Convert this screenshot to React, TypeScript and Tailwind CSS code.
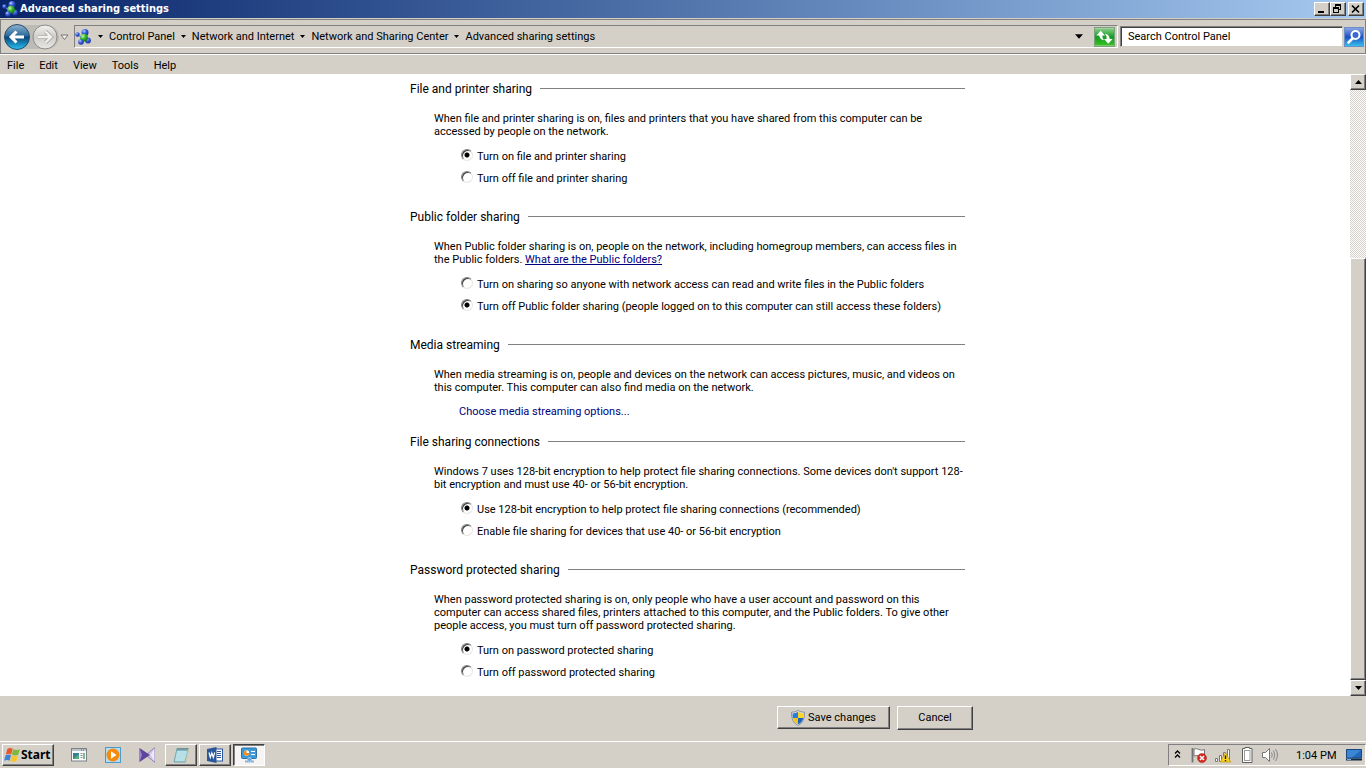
import type { ReactNode } from 'react';
import { clsx } from 'clsx';

const raised =
  'border border-t-white border-l-white border-r-[#404040] border-b-[#404040] bg-[#d4d0c8] shadow-[inset_-1px_-1px_0_#808080]';

const crumbs = ['Control Panel', 'Network and Internet', 'Network and Sharing Center', 'Advanced sharing settings'];
const menus = ['File', 'Edit', 'View', 'Tools', 'Help'];

type SectionData = {
  id: string;
  title: string;
  description: ReactNode;
  options?: string[];
  selected?: number;
  link?: string;
};

const sections: SectionData[] = [
  {
    id: 'file-printer',
    title: 'File and printer sharing',
    description: (
      <>
        When file and printer sharing is on, files and printers that you have shared from this computer can be
        <br />
        accessed by people on the network.
      </>
    ),
    options: ['Turn on file and printer sharing', 'Turn off file and printer sharing'],
    selected: 0,
  },
  {
    id: 'public-folder',
    title: 'Public folder sharing',
    description: (
      <>
        When Public folder sharing is on, people on the network, including homegroup members, can access files in
        <br />
        the Public folders.{' '}
        <a href="#public-folders" className="text-[#000080] underline">
          What are the Public folders?
        </a>
      </>
    ),
    options: [
      'Turn on sharing so anyone with network access can read and write files in the Public folders',
      'Turn off Public folder sharing (people logged on to this computer can still access these folders)',
    ],
    selected: 1,
  },
  {
    id: 'media',
    title: 'Media streaming',
    description: (
      <>
        When media streaming is on, people and devices on the network can access pictures, music, and videos on
        <br />
        this computer. This computer can also find media on the network.
      </>
    ),
    link: 'Choose media streaming options...',
  },
  {
    id: 'encryption',
    title: 'File sharing connections',
    description: (
      <>
        Windows 7 uses 128-bit encryption to help protect file sharing connections. Some devices don't support 128-
        <br />
        bit encryption and must use 40- or 56-bit encryption.
      </>
    ),
    options: [
      'Use 128-bit encryption to help protect file sharing connections (recommended)',
      'Enable file sharing for devices that use 40- or 56-bit encryption',
    ],
    selected: 0,
  },
  {
    id: 'password',
    title: 'Password protected sharing',
    description: (
      <>
        When password protected sharing is on, only people who have a user account and password on this
        <br />
        computer can access shared files, printers attached to this computer, and the Public folders. To give other
        <br />
        people access, you must turn off password protected sharing.
      </>
    ),
    options: ['Turn on password protected sharing', 'Turn off password protected sharing'],
    selected: 0,
  },
];

const NetworkIcon = ({ className }: { className: string }) => (
  <svg viewBox="0 0 16 16" className={className} aria-hidden="true">
    <defs>
      <radialGradient id="ballBlue" cx="0.35" cy="0.3" r="0.8">
        <stop offset="0" stopColor="#b9ccff" />
        <stop offset="0.4" stopColor="#3c62dc" />
        <stop offset="1" stopColor="#10279a" />
      </radialGradient>
      <radialGradient id="ballGreen" cx="0.35" cy="0.3" r="0.8">
        <stop offset="0" stopColor="#c4f7b4" />
        <stop offset="0.45" stopColor="#35b52c" />
        <stop offset="1" stopColor="#0b6a10" />
      </radialGradient>
    </defs>
    <circle cx="2.500" cy="5.500" r="2.200" fill="url(#ballBlue)" />
    <circle cx="10" cy="3.500" r="3.500" fill="url(#ballBlue)" />
    <circle cx="13" cy="11.500" r="2.900" fill="url(#ballBlue)" />
    <circle cx="9" cy="8.700" r="3.900" fill="url(#ballGreen)" />
    <circle cx="6" cy="13" r="2.800" fill="url(#ballBlue)" />
    <path d="M4 7L6 8" stroke="#6f8ccf" strokeWidth="1.200" />
  </svg>
);

const DownArrow = ({ className }: { className?: string }) => (
  <svg viewBox="0 0 7 4" className={clsx('shrink-0', className)} aria-hidden="true">
    <path d="M0 0H7L3.500 4Z" fill="#000" />
  </svg>
);

const TitleBar = () => (
  <header className="flex h-[18px] shrink-0 items-center bg-gradient-to-r from-[#0a246a] to-[#a6caf0] pr-[2px] pl-[2px]">
    <NetworkIcon className="h-4 w-4" />
    <h1 className="ml-[2px] flex-1 font-['DejaVu_Sans_Condensed','Noto_Sans',sans-serif] text-[11px] leading-4 font-bold text-white">
      Advanced sharing settings
    </h1>
    <button aria-label="Minimize" className={clsx('flex h-[14px] w-4 items-center justify-center', raised)}>
      <svg viewBox="0 0 12 10" className="h-[10px] w-3">
        <path d="M2 7H8V9H2Z" />
      </svg>
    </button>
    <button aria-label="Restore" className={clsx('flex h-[14px] w-4 items-center justify-center', raised)}>
      <svg viewBox="0 0 12 10" className="h-[10px] w-3" shapeRendering="crispEdges">
        <path d="M3 0H9V6H7V5H8V2H4V3H3ZM1 3H7V9H1ZM2 5V8H6V5Z" fillRule="evenodd" />
      </svg>
    </button>
    <button aria-label="Close" className={clsx('ml-[2px] flex h-[14px] w-4 items-center justify-center', raised)}>
      <svg viewBox="0 0 12 10" className="h-[10px] w-3">
        <path d="M2 1.500L9 8.500M9 1.500L2 8.500" stroke="#000" strokeWidth="1.700" />
      </svg>
    </button>
  </header>
);

const NavButtons = () => (
  <div className="flex shrink-0 items-center">
    <svg viewBox="0 0 66 28" className="h-7 w-[66px]" role="img" aria-label="Back and forward">
      <defs>
        <linearGradient id="backFill" x1="0" y1="0" x2="0" y2="1">
          <stop offset="0" stopColor="#8fb4cf" />
          <stop offset="0.450" stopColor="#2b6a9b" />
          <stop offset="0.500" stopColor="#0b4478" />
          <stop offset="1" stopColor="#25c4f4" />
        </linearGradient>
        <linearGradient id="forwardFill" x1="0" y1="0" x2="0" y2="1">
          <stop offset="0" stopColor="#f3f2f0" />
          <stop offset="0.500" stopColor="#cfcdc9" />
          <stop offset="1" stopColor="#e9e8e5" />
        </linearGradient>
      </defs>
      <rect x="2" y="2" width="54" height="24" rx="12" fill="#bdbbb6" />
      <circle cx="14" cy="14" r="12.500" fill="url(#backFill)" stroke="#294b69" />
      <path d="M21 14H9M13.500 8.500L8 14L13.500 19.500" fill="none" stroke="#fff" strokeWidth="3" />
      <circle cx="42" cy="14" r="12" fill="url(#forwardFill)" stroke="#8b8b8b" />
      <path d="M35 14H47M42.500 8.500L48 14L42.500 19.500" fill="none" stroke="#aaa8a4" strokeWidth="4" />
      <path d="M35 14H47M42.500 8.500L48 14L42.500 19.500" fill="none" stroke="#f2f1ef" strokeWidth="2.400" />
      <path d="M58 12H65L61.500 16.500Z" fill="#f4f4f4" stroke="#77756f" />
    </svg>
  </div>
);

const AddressBar = () => (
  <div className="border-b border-white pt-px">
    <div className="flex h-[35px] items-center border border-[#808080] pr-px pl-[2px]">
      <NavButtons />
      <nav
        aria-label="Breadcrumb"
        className="ml-[5px] flex h-[23px] flex-1 items-center border border-t-[#808080] border-r-white border-b-white border-l-[#808080]"
      >
        <NetworkIcon className="h-4 w-4" />
        <DownArrow className="mr-[6px] ml-[7px] h-[3px] w-[5px]" />
        {crumbs.map((crumb, i) => (
          <div key={crumb} className="flex items-center">
            {i > 0 && <DownArrow className="mx-[6px] h-[3px] w-[5px]" />}
            <a href="#">{crumb}</a>
          </div>
        ))}
        <button aria-label="Previous locations" className="ml-auto px-[11px]">
          <DownArrow className="h-[5px] w-2" />
        </button>
        <button aria-label="Refresh" className="h-5 w-[21px] border border-[#7aa37c]">
          <svg viewBox="0 0 20 18" className="h-full w-full">
            <defs>
              <linearGradient id="refreshFill" x1="0" y1="0" x2="0" y2="1">
                <stop offset="0" stopColor="#86cf86" />
                <stop offset="0.5" stopColor="#159a26" />
                <stop offset="1" stopColor="#37c321" />
              </linearGradient>
            </defs>
            <rect width="20" height="18" fill="url(#refreshFill)" />
            <path d="M6 2.500L1.500 7.500H4.500Q5 12 9.500 12.500Q7.500 10.500 7.700 7.500H10.500Z" fill="#fff" />
            <path d="M14 16L18.500 11H15.500Q15 6 10.500 5.500Q12.500 7.500 12.300 11H9.500Z" fill="#fff" />
          </svg>
        </button>
        <span className="w-[2px]" />
      </nav>
      <div className="ml-[2px] flex h-[23px] w-[244px] items-center">
        <input
          type="text"
          aria-label="Search Control Panel"
          placeholder="Search Control Panel"
          className="h-[21px] min-w-0 flex-1 border border-t-[#808080] border-r-[#d4d0c8] border-b-[#d4d0c8] border-l-[#808080] bg-white px-[7px] shadow-[inset_1px_1px_0_#404040] outline-none placeholder:text-black"
        />
        <button aria-label="Search" className="ml-px h-5 w-5">
          <svg viewBox="0 0 20 20" className="h-full w-full">
            <defs>
              <linearGradient id="searchFill" x1="0" y1="0" x2="0" y2="1">
                <stop offset="0" stopColor="#8ea9e6" />
                <stop offset="0.500" stopColor="#1e50c4" />
                <stop offset="1" stopColor="#35c6ee" />
              </linearGradient>
            </defs>
            <rect x="0.500" y="0.500" width="19" height="19" fill="url(#searchFill)" stroke="#6d8fc4" />
            <path d="M9 11L4.500 15.500" stroke="#fff" strokeWidth="2.600" strokeLinecap="round" />
            <circle cx="11.500" cy="8" r="4" fill="#3b68cf" stroke="#fff" strokeWidth="2" />
          </svg>
        </button>
      </div>
    </div>
  </div>
);

const MenuBar = () => (
  <div role="menubar" className="flex h-[19px] shrink-0 items-center gap-[15px] px-[7px] pt-[2px]">
    {menus.map((menu) => (
      <button key={menu} role="menuitem">
        {menu}
      </button>
    ))}
  </div>
);

const Section = ({ id, title, description, options, selected, link }: SectionData) => (
  <section aria-labelledby={`${id}-title`}>
    <div className="flex items-center gap-2">
      <h2 id={`${id}-title`} className="text-[12px] leading-4">
        {title}
      </h2>
      <div className="mb-px h-px flex-1 bg-[#808080]" />
    </div>
    <p className="mt-[15px] pl-6 leading-[13px] whitespace-nowrap">{description}</p>
    {options && (
      <div role="radiogroup" aria-labelledby={`${id}-title`} className="mt-[7px] mb-5 pl-[51px]">
        {options.map((option, i) => (
          <label key={option} className="flex h-[22px] items-center">
            <input
              type="radio"
              name={id}
              defaultChecked={i === selected}
              className="mb-[2px] h-3 w-3 shrink-0 appearance-none rounded-full border border-t-[#808080] border-r-[#e8e6e1] border-b-[#e8e6e1] border-l-[#808080] bg-white shadow-[inset_1px_1px_0_#404040] checked:bg-[radial-gradient(circle,#000_2px,transparent_3px)]"
            />
            <span className="ml-1 pt-[2px]">{option}</span>
          </label>
        ))}
      </div>
    )}
    {link && (
      <a href="#streaming" className="mt-[11px] mb-4 block pl-[49px] leading-[13px] text-[#000080]">
        {link}
      </a>
    )}
  </section>
);

const Scrollbar = () => (
  <div
    aria-hidden="true"
    className="flex w-4 shrink-0 flex-col bg-[conic-gradient(#fff_25%,#d4d0c8_0_50%,#fff_0_75%,#d4d0c8_0)] bg-[size:2px_2px]"
  >
    <div className={clsx('flex h-4 items-center justify-center', raised)}>
      <DownArrow className="h-1 w-[7px] rotate-180" />
    </div>
    <div className="flex-[169]" />
    <div className={clsx('flex-[421]', raised)} />
    <div className={clsx('flex h-4 items-center justify-center', raised)}>
      <DownArrow className="h-1 w-[7px]" />
    </div>
  </div>
);

const ShieldIcon = () => (
  <svg viewBox="0 0 14 16" className="h-4 w-[14px]" aria-hidden="true">
    <path d="M7 0.500Q10 2.200 13.500 2.200Q14.200 12 7 15.500Q-0.200 12 0.500 2.200Q4 2.200 7 0.500Z" fill="#d9dde0" stroke="#8b949c" />
    <path d="M7 2V8H1.700Q1.500 6 1.700 3.500Q4.500 3.400 7 2Z" fill="#2b7bd8" />
    <path d="M7 2V8H12.300Q12.500 6 12.300 3.500Q9.500 3.400 7 2Z" fill="#fbd42c" />
    <path d="M7 14.300V8H1.700Q2.600 12.300 7 14.300Z" fill="#f6c419" />
    <path d="M7 14.300V8H12.300Q11.400 12.300 7 14.300Z" fill="#1763bf" />
  </svg>
);

const Footer = () => (
  <footer className="h-11 shrink-0 pt-[10px]">
    <div className="mx-auto flex max-w-[580px] items-start justify-end gap-[7px]">
      <button className={clsx('flex h-[23px] w-[113px] items-center justify-center gap-[3px]', raised)}>
        <ShieldIcon />
        Save changes
      </button>
      <button className={clsx('h-6 w-[76px]', raised)}>Cancel</button>
    </div>
  </footer>
);

const WindowsLogo = () => (
  <svg viewBox="0 0 16 16" className="h-4 w-4" aria-hidden="true">
    <path d="M3.300 2Q6 0.300 8.700 1.800L7.200 7.500Q4.700 6 1.800 7.600Z" fill="#e8562a" />
    <path d="M9.300 2.200Q12 3.700 15.800 2.200L14.200 7.800Q11 9.200 7.900 7.800Z" fill="#7db83a" />
    <path d="M1.600 8.300Q4.500 7 7 8.200L5.600 13.700Q3 12.300 0.100 13.800Z" fill="#3f83d6" />
    <path d="M7.700 8.600Q10.800 9.900 14 8.500L12.500 14Q9.500 15.400 6.300 14Z" fill="#f9c62b" />
  </svg>
);

const ExplorerIcon = () => (
  <svg viewBox="0 0 16 14" className="h-[14px] w-4" aria-hidden="true">
    <rect x="0.500" y="0.500" width="15" height="12.500" fill="#f8f8f8" stroke="#7b8184" />
    <path d="M1 1H15V3H1Z" fill="#b9c3c9" />
    <path d="M10 2H14" stroke="#5c6970" strokeDasharray="1 1" />
    <rect x="2" y="5" width="6" height="6" fill="#3a7d96" />
    <path d="M2 11L8 6V11Z" fill="#58a884" />
    <path d="M9.500 5.500H11.500M9.500 7.500H11.500M9.500 9.500H11.500" stroke="#8b9499" />
    <path d="M13 5V11" stroke="#5aa776" strokeWidth="1.500" />
  </svg>
);

const PlayerIcon = () => (
  <svg viewBox="0 0 16 16" className="h-4 w-4" aria-hidden="true">
    <rect x="0.500" y="0.500" width="15" height="15" fill="#b7dcf1" stroke="#4b9bcb" />
    <circle cx="8" cy="8" r="6.500" fill="#f58a0b" />
    <path d="M6 4.200L11.500 8L6 11.800Z" fill="#fff" />
  </svg>
);

const VisualStudioIcon = () => (
  <svg viewBox="0 0 16 16" className="h-4 w-4" aria-hidden="true">
    <path d="M15.500 0.800V15.200L7 8Z" fill="#cfc6e3" stroke="#9484ba" />
    <path d="M15.500 1.500L11.500 8L15.500 14.500Z" fill="#eee9f6" />
    <path d="M0.500 1L11 8L0.500 15Z" fill="#5e459b" />
    <path d="M0.500 1L3 8L0.500 15Z" fill="#9a86c9" />
  </svg>
);

const NotepadIcon = () => (
  <svg viewBox="0 0 16 16" className="h-4 w-4" aria-hidden="true">
    <path d="M4 1.500H15.500L12.500 15H1Z" fill="#9cd3dc" stroke="#659aa4" strokeWidth="0.800" />
    <path d="M4 5H13.500M3.500 7H13M3 9H12.500M2.700 11H12M2.200 13H11.700" stroke="#d7f1f3" strokeWidth="0.900" />
    <path d="M4.500 2.500H15" stroke="#4e646b" strokeWidth="2" strokeDasharray="1 1" />
    <path d="M15.500 2L13 15" stroke="#d8cda2" />
  </svg>
);

const WordIcon = () => (
  <svg viewBox="0 0 16 16" className="h-4 w-4" aria-hidden="true">
    <rect x="8" y="2" width="7.500" height="12" fill="#fff" stroke="#2b579a" />
    <path d="M10 4.500H14M10 6.500H14M10 8.500H14M10 10.500H14" stroke="#2b579a" />
    <path d="M0 2L9.500 0V16L0 14Z" fill="#2b579a" />
    <path d="M2 5.500L3.300 10.500L4.800 6L6.300 10.500L7.700 5.500" fill="none" stroke="#fff" strokeWidth="1.200" />
  </svg>
);

const ControlPanelIcon = () => (
  <svg viewBox="0 0 16 16" className="h-4 w-4" aria-hidden="true">
    <rect x="0.500" y="1" width="15" height="10.500" rx="1" fill="#3e9ad9" stroke="#2d6ea5" />
    <circle cx="5.500" cy="6" r="2.700" fill="#fff" />
    <path d="M5.500 6V3.300A2.700 2.700 0 1 0 8.200 6Z" fill="#f08a24" />
    <path d="M10 4.500H14M10 7.500H14" stroke="#fff" />
    <path d="M6 12H11V13.500H13V15.500H4V13.500H6Z" fill="#8db4d2" />
    <circle cx="8.500" cy="12.500" r="2" fill="#5ba3d4" stroke="#d5e8f5" strokeWidth="0.600" />
  </svg>
);

const quickLaunch = [
  { label: 'Explorer', icon: <ExplorerIcon /> },
  { label: 'Media player', icon: <PlayerIcon /> },
  { label: 'Visual Studio', icon: <VisualStudioIcon /> },
];

const Tray = () => (
  <div className="flex h-[22px] w-[198px] items-center border border-t-[#808080] border-r-white border-b-white border-l-[#808080] pl-[5px]">
    <button aria-label="Show hidden icons">
      <svg viewBox="0 0 7 8" className="mb-[2px] h-2 w-[7px]">
        <path d="M1 3.500L3.500 1L6 3.500M1 7.500L3.500 5L6 7.500" fill="none" stroke="#000" strokeWidth="1.300" />
      </svg>
    </button>
    <svg viewBox="0 0 16 16" className="ml-[10px] h-4 w-4" aria-hidden="true">
      <path d="M1.500 1V15.500" stroke="#737373" strokeWidth="1.800" />
      <path d="M3 2Q5.500 1 8 2.500T13.500 2.500V9Q11 10 8.500 9T3 9Z" fill="#fff" stroke="#777" />
      <circle cx="11" cy="11" r="4.500" fill="#d7281e" stroke="#9f1c17" strokeWidth="0.500" />
      <path d="M9 9L13 13M13 9L9 13" stroke="#fff" strokeWidth="1.600" />
    </svg>
    <svg viewBox="0 0 16 16" className="ml-2 h-4 w-4" aria-hidden="true">
      <path
        d="M0.500 11.500H2.500V14.500H0.500ZM4.500 8.500H6.500V14.500H4.500ZM8.500 5.500H10.500V14.500H8.500ZM12.500 2.500H14.500V14.500H12.500Z"
        fill="#fff"
        stroke="#777"
      />
      <path d="M10.500 5.500L15.700 15H5.300Z" fill="#fbd51d" stroke="#bb910b" strokeWidth="0.700" />
      <path d="M10.500 8.500V12M10.500 13V14.200" stroke="#222" strokeWidth="1.400" />
    </svg>
    <svg viewBox="0 0 16 16" className="ml-2 h-4 w-4" aria-hidden="true">
      <path d="M6 0.500H10.500V1.500H13V15.500H3.500V1.500H6Z" fill="#fff" stroke="#5f5f5f" />
      <rect x="5.500" y="3.500" width="5.500" height="10" fill="#fff" stroke="#9c9c9c" />
    </svg>
    <svg viewBox="0 0 17 16" className="ml-[7px] h-4 w-[17px]" aria-hidden="true">
      <path d="M0.500 5.500H3.500L7.500 1.500V14.500L3.500 10.500H0.500Z" fill="#fff" stroke="#777" />
      <path d="M9.500 5.500Q11 8 9.500 10.500M11.500 3.500Q14 8 11.500 12.500M13.500 2Q17.500 8 13.500 14" fill="none" stroke="#888" />
    </svg>
    <time className="ml-[17px] pt-px whitespace-nowrap">1:04 PM</time>
    <button aria-label="Show desktop" className="mr-[3px] ml-auto">
      <svg viewBox="0 0 16 12" className="h-3 w-4">
        <path d="M0.500 0.500H15.500V9H0.500Z" fill="#2369bd" stroke="#17457f" />
        <path d="M1 1H15L6 8.500H1Z" fill="#3b86d2" />
        <path d="M0 9.500H16V11.500H0Z" fill="#122b4a" />
        <path d="M1 10.500H5" stroke="#7fb5e6" />
      </svg>
    </button>
  </div>
);

const Taskbar = () => (
  <div className="flex h-7 shrink-0 items-start pt-px">
    <div className="flex flex-1 items-center border-t border-white pt-[2px] pl-[2px]">
      <button
        className={clsx(
          "flex h-[22px] w-[52px] items-center gap-px pl-px font-['Noto_Sans',sans-serif] text-[12px] font-bold",
          raised
        )}
      >
        <WindowsLogo />
        Start
      </button>
      <div className="ml-[17px] flex gap-[18px]">
        {quickLaunch.map(({ label, icon }) => (
          <button key={label} aria-label={label} className="flex h-[22px] w-4 items-center justify-center">
            {icon}
          </button>
        ))}
      </div>
      <div className="ml-[10px] flex gap-[2px]">
        <button aria-label="Notepad" className={clsx('flex h-[22px] w-8 items-center justify-center', raised)}>
          <NotepadIcon />
        </button>
        <button aria-label="Word" className={clsx('flex h-[22px] w-8 items-center justify-center', raised)}>
          <WordIcon />
        </button>
        <button
          aria-label="Control Panel"
          className="flex h-[22px] w-8 items-center justify-center border border-t-[#404040] border-r-white border-b-white border-l-[#404040] bg-[#f6f5f3] shadow-[inset_1px_1px_0_#808080]"
        >
          <ControlPanelIcon />
        </button>
      </div>
      <div className="ml-auto">
        <Tray />
      </div>
    </div>
  </div>
);

export default function App() {
  return (
    <div className="flex h-screen flex-col bg-[#d4d0c8] font-['Roboto','Liberation_Sans',sans-serif] text-[11px] leading-[14px] text-black">
      <TitleBar />
      <AddressBar />
      <MenuBar />
      <div className="flex min-h-0 flex-1 bg-white">
        <main className="min-w-0 flex-1 overflow-hidden pt-[7px]">
          <div className="mx-auto max-w-[580px] pl-[25px]">
            {sections.map((section) => (
              <Section key={section.id} {...section} />
            ))}
          </div>
        </main>
        <Scrollbar />
      </div>
      <Footer />
      <Taskbar />
    </div>
  );
}
